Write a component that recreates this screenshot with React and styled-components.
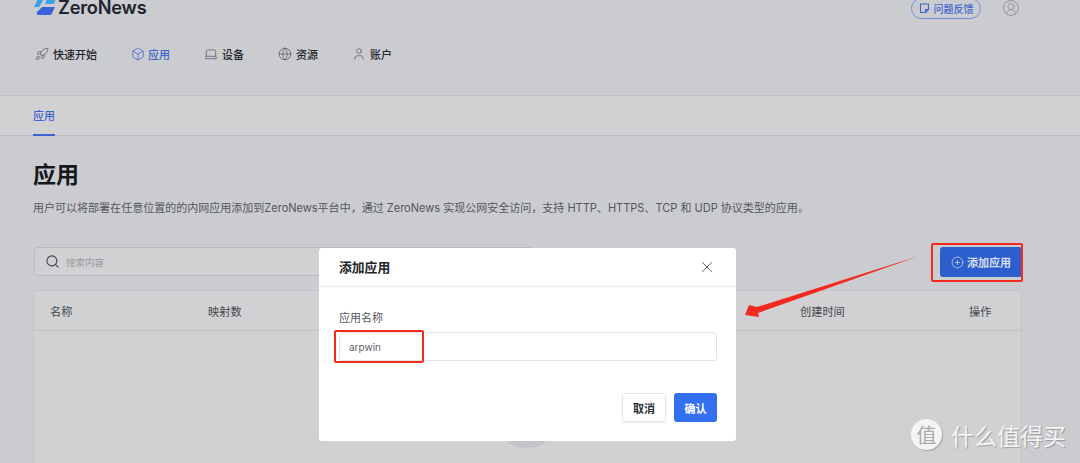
import React from 'react'
import styled, { createGlobalStyle } from 'styled-components'
import { Rocket, Box, Laptop, Globe, User, CircleUserRound, Search, X, CirclePlus } from 'lucide-react'

const GlobalStyle = createGlobalStyle`
  html, body {
    margin: 0;
    height: 100%;
    overflow: hidden;
    background: #cbccd0;
    font-family: Inter, "Noto Sans CJK SC", sans-serif;
  }
  * { box-sizing: border-box; }
`

const navItems = [
  { label: '快速开始', icon: Rocket },
  { label: '应用', icon: Box, active: true },
  { label: '设备', icon: Laptop },
  { label: '资源', icon: Globe },
  { label: '账户', icon: User },
]

const App = () => {
  return (
    <Page>
      <GlobalStyle />
      <Header>
        <TopRow>
          <Brand>
            <svg width="22" height="16" viewBox="0 0 22 16">
              <path d="M4 0h6L5 8H0z" fill="#3aa0e8" />
              <path d="M13 0h9l-2 5h-9z" fill="#3aa0e8" />
              <path d="M8 8h13l-3 6a2 2 0 0 1-2 2H5a2 2 0 0 1-2-3z" fill="#3a62d8" />
            </svg>
            <BrandName>ZeroNews</BrandName>
          </Brand>
          <TopActions>
            <FeedbackButton>
              <svg width="11" height="11" viewBox="0 0 11 11" fill="none" stroke="currentColor" strokeWidth="1.1">
                <path d="M1.500 1h8v5.500l-3 3h-5z" strokeLinejoin="round" />
                <path d="M6.500 9.500v-3h3" />
              </svg>
              问题反馈
            </FeedbackButton>
            <CircleUserRound size={18} strokeWidth={1.3} color="#96979b" />
          </TopActions>
        </TopRow>
        <Nav>
          {navItems.map(({ label, icon: Icon, active }) => (
            <NavItem key={label} $active={active}>
              <Icon size={14} strokeWidth={1.3} />
              {label}
            </NavItem>
          ))}
        </Nav>
      </Header>

      <TabBar>
        <Tab>应用</Tab>
      </TabBar>

      <Content>
        <Title>应用</Title>
        <Desc>
          用户可以将部署在任意位置的的内网应用添加到ZeroNews平台中，通过 ZeroNews 实现公网安全访问，支持 HTTP、HTTPS、TCP 和 UDP 协议类型的应用。
        </Desc>
        <Toolbar>
          <SearchBox>
            <Search size={15} strokeWidth={1.7} color="#3d3f45" />
            搜索内容
          </SearchBox>
          <AddButton>
            <CirclePlus size={13} strokeWidth={1.3} />
            添加应用
          </AddButton>
        </Toolbar>
        <Table>
          <TableHead>
            <span>名称</span>
            <span>映射数</span>
            <span>创建时间</span>
            <span>操作</span>
          </TableHead>
        </Table>
      </Content>

      <EmptyHint />

      <Modal>
        <ModalHead>
          添加应用
          <X size={18} strokeWidth={1.2} color="#4a4c52" />
        </ModalHead>
        <ModalBody>
          <FieldLabel>应用名称</FieldLabel>
          <Input>arpwin</Input>
          <ModalActions>
            <CancelButton>取消</CancelButton>
            <ConfirmButton>确认</ConfirmButton>
          </ModalActions>
        </ModalBody>
      </Modal>

      {/* annotations drawn over the screenshot */}
      <InputMark />
      <ButtonMark />
      <Arrow width="190" height="70" viewBox="0 0 190 70">
        <polygon points="174,5 12,56 4,54 0,64 14,66 13,62" fill="#f4291f" />
      </Arrow>

      <Watermark>
        <WatermarkBadge>值</WatermarkBadge>
        什么值得买
      </Watermark>
    </Page>
  )
}

const Page = styled.div`
  position: relative;
  width: 1080px;
  height: 463px;
  overflow: hidden;
  background: #cbccd0;
`

const Header = styled.header`
  display: flex;
  flex-direction: column;
  height: 96px;
  padding: 0 60px 0 34px;
  border-bottom: 1px solid #bcbdc2;
`

const TopRow = styled.div`
  display: flex;
  align-items: center;
  justify-content: space-between;
  height: 20px;
  margin-top: -2px;
`

const Brand = styled.div`
  display: flex;
  align-items: center;
  gap: 2px;
  margin-top: -2px;
`

const BrandName = styled.span`
  font-size: 18.200px;
  font-weight: 600;
  letter-spacing: -0.2px;
  color: #20242e;
`

const TopActions = styled.div`
  display: flex;
  align-items: center;
  gap: 21px;
`

const FeedbackButton = styled.div`
  display: flex;
  align-items: center;
  justify-content: center;
  gap: 4px;
  width: 70px;
  height: 21px;
  border: 1px solid #6f8bdc;
  border-radius: 11px;
  font-size: 10px;
  font-weight: 500;
  color: #3f65cd;
`

const Nav = styled.nav`
  display: flex;
  gap: 34px;
  margin-top: 28px;
  padding-left: 1px;
`

const NavItem = styled.div`
  display: flex;
  align-items: center;
  gap: ${(p) => (p.$active ? 3 : 4)}px;
  height: 16px;
  font-size: 11px;
  font-weight: 500;
  color: ${(p) => (p.$active ? '#3f65cd' : '#24262c')};

  svg {
    color: ${(p) => (p.$active ? '#3f65cd' : '#5a5c62')};
  }
`

const TabBar = styled.div`
  height: 40px;
  padding-left: 33px;
  background: #d1d1d3;
  border-bottom: 1px solid #bcbdc2;
`

const Tab = styled.div`
  display: flex;
  align-items: center;
  width: 22px;
  height: 40px;
  font-size: 11px;
  font-weight: 500;
  color: #3f65cd;
  border-bottom: 2px solid #3f65cd;
`

const Content = styled.main`
  padding: 24px 58px 0 33px;
`

const Title = styled.h1`
  margin: 0;
  font-size: 23px;
  line-height: 30px;
  font-weight: 700;
  color: #17181c;
`

const Desc = styled.p`
  margin: 10px 0 0;
  font-size: 11.030px;
  line-height: 16px;
  white-space: nowrap;
  color: #55575d;
`

const Toolbar = styled.div`
  display: flex;
  align-items: flex-start;
  justify-content: space-between;
  margin-top: 31px;
`

const SearchBox = styled.div`
  display: flex;
  align-items: center;
  gap: 6px;
  width: 500px;
  height: 29px;
  padding-left: 10px;
  margin-left: 1px;
  background: #d1d1d3;
  border: 1px solid #b9babf;
  border-radius: 3px;
  font-size: 9.500px;
  color: #9b9ca1;
`

const AddButton = styled.div`
  display: flex;
  align-items: center;
  justify-content: center;
  gap: 3px;
  width: 82px;
  height: 30px;
  background: #2c5fcd;
  border-radius: 3px;
  font-size: 11px;
  font-weight: 600;
  color: #d9deea;
`

const Table = styled.section`
  margin-top: 13px;
  height: 200px;
  background: #d1d1d3;
  border: 1px solid #c4c5c9;
  border-radius: 3px 3px 0 0;
`

const TableHead = styled.div`
  display: grid;
  grid-template-columns: 158px 592px 169px 1fr;
  align-items: center;
  height: 40px;
  padding-left: 16px;
  border-bottom: 1px solid #c0c1c5;
  font-size: 11.200px;
  color: #45474d;
`

const EmptyHint = styled.div`
  position: absolute;
  left: 508px;
  top: 434px;
  width: 37px;
  height: 14px;
  border-radius: 50%;
  background: #c4c5c8;
`

const Modal = styled.div`
  position: absolute;
  left: 319px;
  top: 248px;
  width: 417px;
  height: 193px;
  background: #fff;
  border-radius: 3px;
`

const ModalHead = styled.div`
  display: flex;
  align-items: center;
  justify-content: space-between;
  height: 39px;
  padding: 0 20px 1px 20px;
  border-bottom: 1px solid #e9eaec;
  font-size: 12.800px;
  font-weight: 600;
  color: #22242a;
`

const ModalBody = styled.div`
  padding: 23px 19px 0 20px;
`

const FieldLabel = styled.div`
  font-size: 11px;
  line-height: 16px;
  color: #55575d;
`

const Input = styled.div`
  display: flex;
  align-items: center;
  height: 29px;
  margin-top: 6px;
  padding-left: 9px;
  border: 1px solid #e0e2e6;
  border-radius: 3px;
  font-size: 10px;
  color: #5f6167;
`

const ModalActions = styled.div`
  display: flex;
  justify-content: flex-end;
  gap: 8px;
  margin-top: 32px;
`

const CancelButton = styled.div`
  display: flex;
  align-items: center;
  justify-content: center;
  width: 44px;
  height: 29px;
  border: 1px solid #e6e7ea;
  border-radius: 3px;
  box-shadow: 0 1px 2px rgba(0, 0, 0, 0.08);
  font-size: 11px;
  font-weight: 600;
  color: #2a2c32;
`

const ConfirmButton = styled(CancelButton)`
  width: 43px;
  border: none;
  box-shadow: none;
  background: #3370f0;
  color: #fff;
`

const InputMark = styled.div`
  position: absolute;
  left: 334px;
  top: 330px;
  width: 90px;
  height: 33px;
  border: 2px solid #f4291f;
  border-radius: 2px;
`

const ButtonMark = styled.div`
  position: absolute;
  left: 931px;
  top: 243px;
  width: 92px;
  height: 39px;
  border: 2px solid #f4291f;
  border-radius: 2px;
`

const Arrow = styled.svg`
  position: absolute;
  left: 745px;
  top: 251px;
`

const Watermark = styled.div`
  position: absolute;
  left: 911px;
  top: 419px;
  display: flex;
  align-items: center;
  gap: 9px;
  height: 31px;
  font-size: 23px;
  color: #f4f4f5;
  text-shadow: 1px 1px 1px rgba(0, 0, 0, 0.25);
`

const WatermarkBadge = styled.span`
  display: flex;
  align-items: center;
  justify-content: center;
  width: 31px;
  height: 31px;
  border-radius: 50%;
  background: #f4f4f5;
  box-shadow: 1px 1px 1px rgba(0, 0, 0, 0.2);
  font-size: 20px;
  color: #a9aaad;
  text-shadow: none;
`

export default App
